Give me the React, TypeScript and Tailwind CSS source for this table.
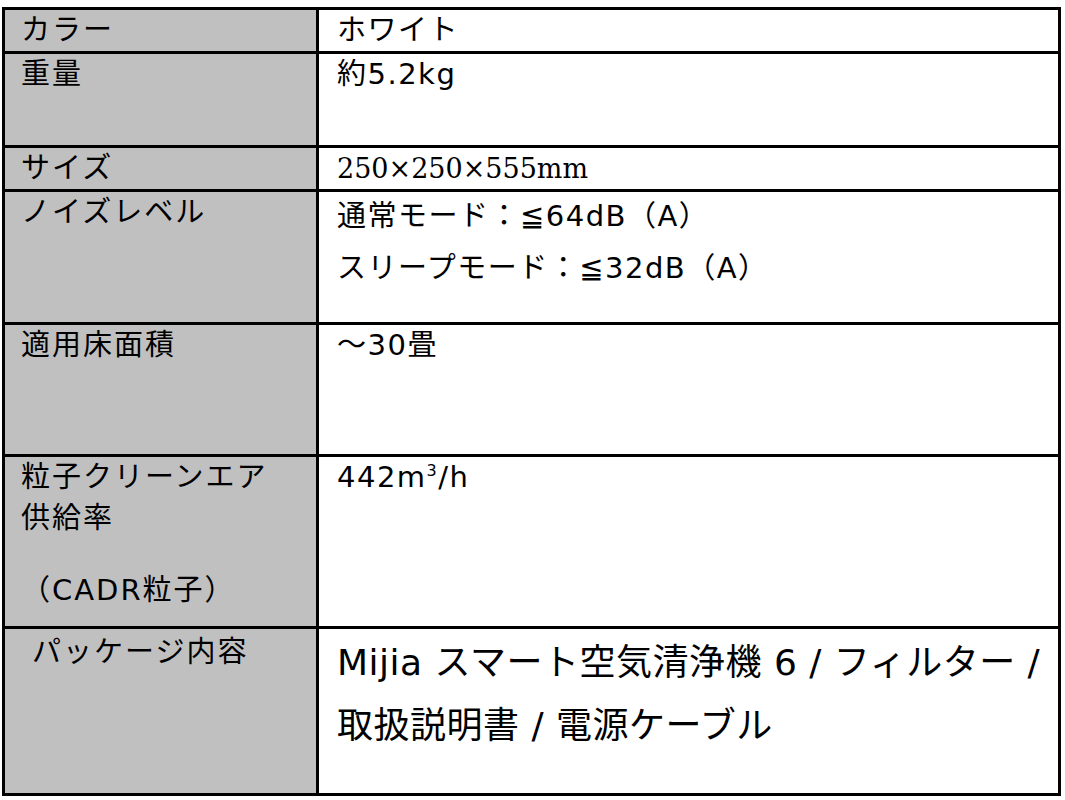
const sans = "font-['DejaVu_Sans','Noto_Sans_CJK_JP',sans-serif]";

function Label({ children, className = "" }: { children: React.ReactNode; className?: string }) {
  return (
    <div className={`bg-[#c0c0c0] pl-[16px] text-[29px] leading-[41px] tracking-[2px] ${className}`}>
      {children}
    </div>
  );
}

function Value({ children, className = "" }: { children: React.ReactNode; className?: string }) {
  return (
    <div className={`bg-white pl-[18px] text-[29px] leading-[41px] tracking-[1.5px] ${className}`}>
      {children}
    </div>
  );
}

export default function App() {
  return (
    <div className={`min-h-[800px] w-[1065px] bg-white pl-[2px] pt-[7px] text-black ${sans}`}>
      <div className="grid w-[1059px] grid-cols-[311px_1fr] grid-rows-[41px_91px_41px_130px_129px_169px_164px] gap-[3px] bg-black p-[3px]">
        <Label>カラー</Label>
        <Value>ホワイト</Value>

        <Label>重量</Label>
        <Value>約5.2kg</Value>

        <Label>サイズ</Label>
        <Value className="font-['DejaVu_Serif','Noto_Serif_CJK_JP',serif] !text-[27px] !tracking-normal">
          250×250×555mm
        </Value>

        <Label>ノイズレベル</Label>
        <Value className="pt-[4px]">
          <p>通常モード：≦64dB（A）</p>
          <p className="mt-[11px]">スリープモード：≦32dB（A）</p>
        </Value>

        <Label>適用床面積</Label>
        <Value>～30畳</Value>

        <Label>
          <p>粒子クリーンエア</p>
          <p>供給率</p>
          <p className="mt-[31px]">（CADR粒子）</p>
        </Label>
        <Value>
          442m<sup className="!-top-[11px] text-[16px]">3</sup>/h
        </Value>

        <Label className="pl-[27px] pt-[3px]">パッケージ内容</Label>
        <Value className="!text-[36px] !leading-[63px] !tracking-[0.5px] pt-[2px]">
          <p>Mijia スマート空気清浄機 6 / フィルター /</p>
          <p>取扱説明書 / 電源ケーブル</p>
        </Value>
      </div>
    </div>
  );
}
